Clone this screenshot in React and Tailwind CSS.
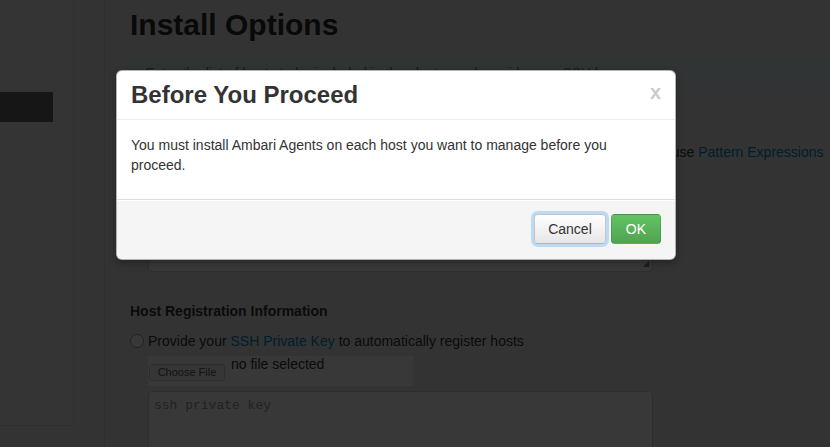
import React from 'react';

const FONT = { fontFamily: '"Liberation Sans", Arial, Helvetica, sans-serif' };

function Sidebar() {
  return (
    <aside className="h-[426px] w-[74px] shrink-0 border-r border-b border-[#d6d6d6] bg-[#eaeaea]">
      <div className="mt-[92px] h-[30px] w-[53px] bg-[#646464]" />
    </aside>
  );
}

function InstallOptions() {
  return (
    <main className="min-h-[447px] flex-1 border-l border-[#d6d6d6] bg-[#e8e8e8] pl-[25px]">
      <h2 className="mt-[5px] text-[30px] leading-[40px] font-bold text-[#2a2a2a]">Install Options</h2>
      <div className="mt-[9px] h-[38px] rounded-l-[4px] border border-r-0 border-[#cfe6ee] bg-[#dfecf2] py-[8px] pl-[14px] text-[14px] leading-[20px] whitespace-nowrap text-[#3a87ad]">
        Enter the list of hosts to be included in the cluster and provide your SSH key.
      </div>
      <h5 className="mt-[18px] text-[14px] leading-[20px] font-bold text-[#333]">Target Hosts</h5>
      <p className="mt-[12px] pl-[15px] text-[14px] leading-[20px] whitespace-nowrap text-[#333]">
        Enter a list of hosts using the Fully Qualified Domain Name (FQDN), one per line. Or use{' '}
        <a className="text-[#0088cc]">Pattern Expressions</a>
      </p>
      <div className="relative mt-[8px] ml-[18px] h-[102px] w-[505px] rounded-[4px] border border-[#ccc] bg-white">
        <span className="absolute right-[3px] bottom-[3px] text-[8px] leading-none text-[#888]">◢</span>
      </div>
      <h5 className="mt-[29px] text-[14px] leading-[20px] font-bold text-[#333]">Host Registration Information</h5>
      <label className="mt-[10px] flex items-center text-[14px] leading-[20px] text-[#333]">
        <span className="h-[14px] w-[14px] rounded-full border border-[#999] bg-white" />
        <span className="ml-[4px]">
          Provide your <a className="text-[#0088cc]">SSH Private Key</a> to automatically register hosts
        </span>
      </label>
      <div className="mt-[5px] ml-[18px] flex h-[30px] w-[265px] items-start bg-white">
        <span className="mt-[8px] ml-[1px] h-[17px] w-[76px] rounded-[3px] border border-[#ccc] bg-[#f5f5f5] text-center text-[11px] leading-[15px] text-[#555]">
          Choose File
        </span>
        <span className="ml-[6px] text-[14px] leading-[16px] text-[#333]">no file selected</span>
      </div>
      <div
        className="mt-[5px] ml-[18px] h-[80px] w-[505px] rounded-[4px] border border-[#ccc] bg-white px-[5px] py-[6px] text-[13px] leading-[16px] text-[#999]"
        style={{ fontFamily: '"Liberation Mono", "Courier New", monospace' }}
      >
        ssh private key
      </div>
    </main>
  );
}

function ProceedModal() {
  return (
    <div className="absolute top-[70px] left-[116px] w-[560px] rounded-[6px] border border-black/30 bg-white shadow-[0_3px_7px_rgba(0,0,0,0.3)]">
      <div className="flex items-start justify-between border-b border-[#eee] px-[14px] py-[9px]">
        <h3 className="text-[24px] leading-[30px] font-bold text-[#333]">Before You Proceed</h3>
        <button className="mt-[2px] text-[20px] leading-[20px] font-bold text-black opacity-20">x</button>
      </div>
      <div className="px-[14px] pt-[15px] pb-[15px]">
        <p className="mb-[9px] text-[14px] leading-[20px] text-[#333]">
          You must install Ambari Agents on each host you want to manage before you proceed.
        </p>
      </div>
      <div className="flex justify-end gap-[5px] rounded-b-[6px] border-t border-[#ddd] bg-[#f5f5f5] px-[14px] pt-[14px] pb-[15px] shadow-[inset_0_1px_0_#fff]">
        <button className="h-[30px] rounded-[4px] border border-[#c5c5c5] border-b-[#b3b3b3] bg-linear-to-b from-white to-[#e6e6e6] px-[13px] text-[14px] leading-[20px] text-[#333] ring-[3px] ring-[#bcdaf5]">
          Cancel
        </button>
        <button className="h-[30px] rounded-[4px] border border-black/10 bg-linear-to-b from-[#62c462] to-[#51a351] px-[14px] text-[14px] leading-[20px] text-white">
          OK
        </button>
      </div>
    </div>
  );
}

export default function App() {
  return (
    <div className="relative h-[447px] w-[830px] overflow-hidden bg-[#e8e8e8]" style={FONT}>
      <div className="flex">
        <Sidebar />
        <div className="w-[30px] shrink-0 bg-[#e8e8e8]" />
        <InstallOptions />
      </div>
      <div className="absolute inset-0 bg-black/[0.78]" />
      <ProceedModal />
    </div>
  );
}
